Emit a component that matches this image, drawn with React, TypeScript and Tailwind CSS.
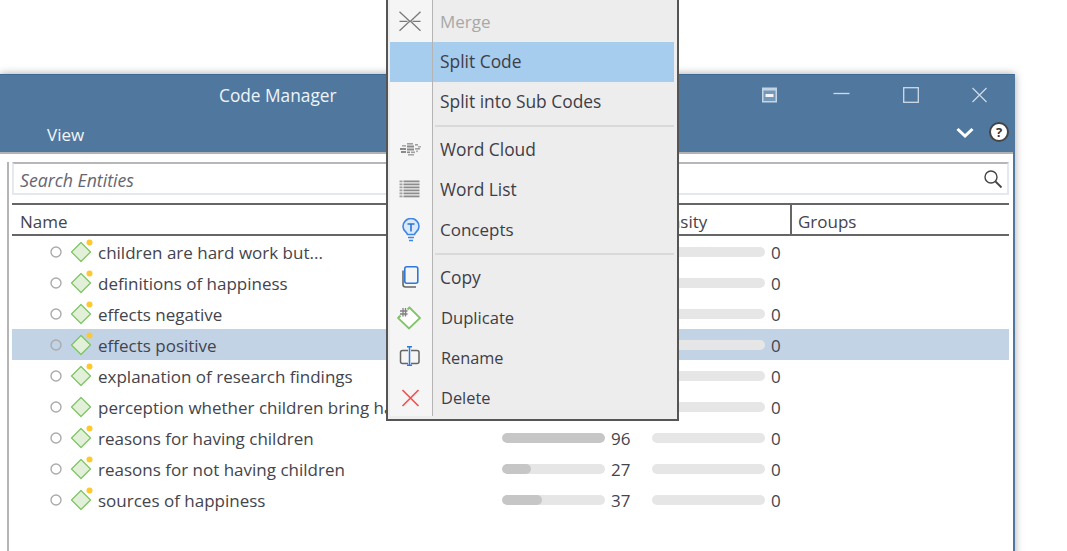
import React from "react";

const font = { fontFamily: '"Open Sans", "Noto Sans", sans-serif' };

const rows: { name: string; v: number; dot: boolean; sel?: boolean }[] = [
  { name: "children are hard work but...", v: 12, dot: true },
  { name: "definitions of happiness", v: 20, dot: true },
  { name: "effects negative", v: 30, dot: true },
  { name: "effects positive", v: 25, dot: true, sel: true },
  { name: "explanation of research findings", v: 8, dot: true },
  { name: "perception whether children bring ha", v: 10, dot: false },
  { name: "reasons for having children", v: 96, dot: true },
  { name: "reasons for not having children", v: 27, dot: true },
  { name: "sources of happiness", v: 37, dot: true },
];

function CodeIcon({ dot }: { dot: boolean }) {
  return (
    <svg width="26" height="26" viewBox="0 0 26 26" className="shrink-0">
      <path d="M11 3.5 L20.5 13 L11 22.5 L1.5 13 Z" fill="#e2f0da" stroke="#7bc45f" strokeWidth="1.2" strokeLinejoin="round" />
      {dot && <circle cx="19.5" cy="3.5" r="3" fill="#ffc92e" />}
    </svg>
  );
}

const ico = { width: 24, height: 24, viewBox: "0 0 24 24", fill: "none" } as const;

const MergeIcon = () => (
  <svg {...ico} stroke="#7a7a7a" strokeWidth="1.3">
    <path d="M0.5 1.7 L10.7 11.3 L0.5 20.7" />
    <path d="M21.5 1.7 L11.5 11.3 L21.5 20.7" />
    <path d="M0.5 11.3 H8.5 M21.5 11.3 H13.5" />
  </svg>
);
const CloudIcon = () => (
  <svg {...ico} fill="#8a8a8a">
    <rect x="8" y="5" width="6" height="1.6" fill="#a0a0a0" />
    <rect x="3" y="7" width="4" height="1.6" fill="#a8a8a8" />
    <rect x="8" y="7.5" width="7" height="2" />
    <rect x="16" y="6" width="3" height="1.6" fill="#a0a0a0" />
    <rect x="19" y="8" width="3" height="1.6" fill="#b0b0b0" />
    <rect x="1" y="10" width="6" height="2" />
    <rect x="8" y="10.5" width="7" height="2" />
    <rect x="16" y="10" width="5" height="1.6" fill="#a0a0a0" />
    <rect x="2" y="13" width="5" height="2" />
    <rect x="8" y="13.5" width="3" height="1.6" />
    <rect x="12" y="13.5" width="4" height="1.6" fill="#a0a0a0" />
    <rect x="17" y="12.5" width="2" height="1.6" fill="#b0b0b0" />
    <rect x="9" y="16" width="6" height="1.6" fill="#a8a8a8" />
  </svg>
);
const ListIcon = () => (
  <svg {...ico} fill="#8c8c8c">
    {[2.5, 5.5, 8.5, 11.5, 14.5, 17.5].map((y) => (
      <g key={y}>
        <rect x="0.5" y={y} width="3" height="1.8" fill="#a0a0a0" />
        <rect x="4.5" y={y} width="16" height="1.8" />
      </g>
    ))}
  </svg>
);
const BulbIcon = () => (
  <svg {...ico} stroke="#3d86e6" strokeWidth="1.6">
    <path d="M8.5 16.5 C8 14 4 13 4 8.5 A8 8 0 0 1 20 8.5 C20 13 16 14 15.5 16.5 Z" fill="#dbe9fb" />
    <path d="M9 19.5 H15 M10 22.5 H14" />
    <path d="M8.5 6 H15.5 M12 6 V13.5" stroke="#2f74d0" />
  </svg>
);
const CopyIcon = () => (
  <svg {...ico}>
    <path d="M4 4.5 V18.5 Q4 21 6.5 21 H17" stroke="#666" strokeWidth="1.6" />
    <rect x="5.8" y="0.8" width="13" height="16.4" rx="2" fill="#f5f5f5" stroke="#2f78d8" strokeWidth="1.6" />
  </svg>
);
const DupIcon = () => (
  <svg width={26} height={24} viewBox="0 0 26 24" fill="none" className="ml-[-2px]">
    <path d="M12.5 1.5 L23 12 L12 22.5 L1 12 Z" fill="#fff" stroke="#82c468" strokeWidth="1.8" />
    <rect x="2" y="1" width="9.5" height="9.5" fill="#f5f5f5" />
    <path d="M1.5 11.5 L3.5 9.5 M10.5 3.5 L12.5 1.5" stroke="#82c468" strokeWidth="1.8" />
    <path d="M3 5 H10.5 M3 8 H10.5 M6 2 V10.5 M8.5 2 V10.5" stroke="#808080" strokeWidth="1.3" />
  </svg>
);
const RenameIcon = () => (
  <svg {...ico}>
    <path d="M9 4.5 H3.5 Q1.5 4.5 1.5 6.5 V15.5 Q1.5 17.5 3.5 17.5 H9 M12 4.5 H18 Q20 4.5 20 6.5 V15.5 Q20 17.5 18 17.5 H12" stroke="#666" strokeWidth="1.5" />
    <path d="M10.5 0.5 V19.5 M8 0.8 H13 M8 19.2 H13" stroke="#2f78d8" strokeWidth="1.5" />
  </svg>
);
const XIcon = () => (
  <svg {...ico} stroke="#f0504f" strokeWidth="1.6">
    <path d="M3.5 4 L19.5 20 M19.5 4 L3.5 20" />
  </svg>
);

function Item({
  label,
  icon,
  disabled,
  active,
  shift,
  last,
  size,
}: {
  label: string;
  icon?: React.ReactNode;
  disabled?: boolean;
  active?: boolean;
  shift?: boolean;
  last?: boolean;
  size?: string;
}) {
  return (
    <div className={`flex h-[40px] ${active ? "bg-[#a6ccee]" : ""}`}>
      <div
        className={`w-[43px] flex items-center pl-[9px] border-r border-[#b4b4b4] ${last ? "h-[38px] pt-[2px]" : "h-[40px]"} ${
          active ? "" : "bg-[#f5f5f5]"
        }`}
      >
        {icon}
      </div>
      <div
        className={`flex items-center ${size ?? "text-[17px]"} ${shift ? "pl-[8px]" : "pl-[7px]"} ${
          disabled ? "text-[#a8a8a8]" : "text-[#3e3e48]"
        }`}
      >
        {label}
      </div>
    </div>
  );
}

function Sep() {
  return (
    <div className="flex h-[8px]">
      <div className="w-[43px] bg-[#f5f5f5] border-r border-[#b4b4b4]" />
      <div className="flex-1 flex items-center pl-[2px]">
        <div className="h-[2px] w-full bg-[#d9d9d9]" />
      </div>
    </div>
  );
}

export default function App() {
  return (
    <div style={font} className="relative h-[551px] w-[1067px] overflow-hidden bg-white pt-[74px] text-[#44444c]">
      <div className="h-[500px] w-[1015px] border-t border-[#3f6a94] border-r-2 border-r-[#50789f] bg-white shadow-[0_0_8px_rgba(0,0,0,0.35)]">
        <div className="h-[77px] bg-[#50789f] text-white">
          <div className="flex h-[41px] items-center">
            <div className="ml-[219px] text-[17.3px] text-[#eef4fa]">Code Manager</div>
            <div className="ml-auto mr-[26px] flex items-center text-[#cddbe9]">
              <svg width="15" height="16" viewBox="0 0 15 16" className="mr-[56px] mb-[2px]">
                <rect x="0" y="0.5" width="15" height="15" fill="#c3d4e5" />
                <rect x="1.5" y="3.5" width="12" height="10.5" fill="#7597b8" />
                <rect x="3.5" y="7" width="8" height="3" fill="#f2f6fa" />
              </svg>
              <svg width="17" height="16" viewBox="0 0 17 16" className="mr-[53px] mb-[2px]">
                <path d="M0.5 6.5 H16.5" stroke="#cddbe9" strokeWidth="1.3" />
              </svg>
              <svg width="16" height="16" viewBox="0 0 16 16" className="mr-[53px] mb-[2px]">
                <rect x="0.7" y="0.7" width="14.6" height="14.6" fill="none" stroke="#cddbe9" strokeWidth="1.3" />
              </svg>
              <svg width="15" height="16" viewBox="0 0 15 16" className="mb-[2px]">
                <path d="M0.5 1 L14.5 15 M14.5 1 L0.5 15" stroke="#cddbe9" strokeWidth="1.2" />
              </svg>
            </div>
          </div>
          <div className="flex h-[36px] items-center">
            <div className="ml-[47px] mt-[2px] text-[17px] text-[#f2f6fa]">View</div>
            <div className="ml-auto mr-[4px] mb-[4px] flex items-center">
              <svg width="18" height="11" viewBox="0 0 18 11" className="mr-[15px]">
                <path d="M1.5 2 L9 9 L16.5 2" fill="none" stroke="#fff" strokeWidth="3" />
              </svg>
              <div className="flex h-[20px] w-[20px] items-center justify-center rounded-full border-2 border-[#444] bg-white text-[13px] font-bold leading-none text-[#333]">
                ?
              </div>
            </div>
          </div>
        </div>
        <div className="h-[2px] bg-[#b2b2b2]" />
        <div className="flex">
          <div className="ml-[7px] mt-[8px] h-[400px] w-[2px] bg-[#b5b5b5]" />
          <div className="ml-[3px] mt-[8px] w-[997px]">
            <div className="flex h-[33px] items-center border-2 border-t-[#b5b5ba] border-x-[#e4e9f1] border-b-[#e4e9f1] pl-[6px] pr-[4px]">
              <span className="pt-[4px] italic text-[17.7px] text-[#666670]">Search Entities</span>
              <svg width="20" height="20" viewBox="0 0 20 20" className="ml-auto">
                <circle cx="8" cy="8" r="6" fill="none" stroke="#444" strokeWidth="1.4" />
                <path d="M12.5 12.5 L18.5 18.5" stroke="#444" strokeWidth="1.8" />
              </svg>
            </div>
            <div className="mt-[8px] flex h-[33px] items-center border-y-2 border-[#666] text-[17px]">
              <div className="relative w-[778px] pl-[8px] pt-[5px]">
                Name
                <span className="absolute left-[636px] top-[5px]">Density</span>
              </div>
              <div className="flex h-full items-center border-l-2 border-[#666] pl-[6px] pt-[5px]">Groups</div>
            </div>
            <div>
              {rows.map((r) => (
                <div
                  key={r.name}
                  className={`flex h-[31px] items-center text-[17px] ${r.sel ? "bg-[#c2d3e6]" : ""}`}
                >
                  <div className="flex h-full w-[490px] items-center overflow-hidden whitespace-nowrap">
                    <svg width="12" height="12" viewBox="0 0 12 12" className="ml-[38px] shrink-0">
                      <circle cx="6" cy="6" r="5" fill="none" stroke="#ababab" strokeWidth="1.4" />
                    </svg>
                    <div className="ml-[8px]">
                      <CodeIcon dot={r.dot} />
                    </div>
                    <span className="ml-[2px] pt-[3px]">{r.name}</span>
                  </div>
                  <div className="h-[10px] w-[103px] overflow-hidden rounded-full bg-[#e6e6e6]">
                    <div className="h-full rounded-full bg-[#c6c6c6]" style={{ width: `${Math.min(100, (r.v / 96) * 100)}%` }} />
                  </div>
                  <div className="ml-[6px] w-[41px] pt-[3px]">{r.v}</div>
                  <div className="h-[10px] w-[113px] rounded-full bg-[#e6e6e6]" />
                  <div className="ml-[6px] pt-[3px]">0</div>
                </div>
              ))}
            </div>
          </div>
        </div>
      </div>

      <div className="absolute left-[386px] top-[-2px] w-[293px] border-2 border-[#555] bg-[#ededed] pl-[2px] pr-[3px] pb-[1px]">
        <div className="h-[2px] w-[43px] border-r border-[#b4b4b4] bg-[#f5f5f5]" />
        <Item label="Merge" icon={<MergeIcon />} disabled />
        <Item label="Split Code" active size="text-[17.4px] pb-[2px]" />
        <Item label="Split into Sub Codes" size="text-[17.4px] pb-[2px]" />
        <Sep />
        <Item label="Word Cloud" icon={<CloudIcon />} size="text-[17.4px] pb-[2px]" />
        <Item label="Word List" icon={<ListIcon />} size="text-[17.4px] pb-[2px]" />
        <Item label="Concepts" icon={<BulbIcon />} />
        <Sep />
        <Item label="Copy" icon={<CopyIcon />} size="text-[17.4px] pb-[2px]" />
        <Item label="Duplicate" icon={<DupIcon />} shift size="text-[16.6px]" />
        <Item label="Rename" icon={<RenameIcon />} shift size="text-[16.3px]" />
        <Item label="Delete" icon={<XIcon />} shift last size="text-[16.4px]" />
      </div>
    </div>
  );
}
